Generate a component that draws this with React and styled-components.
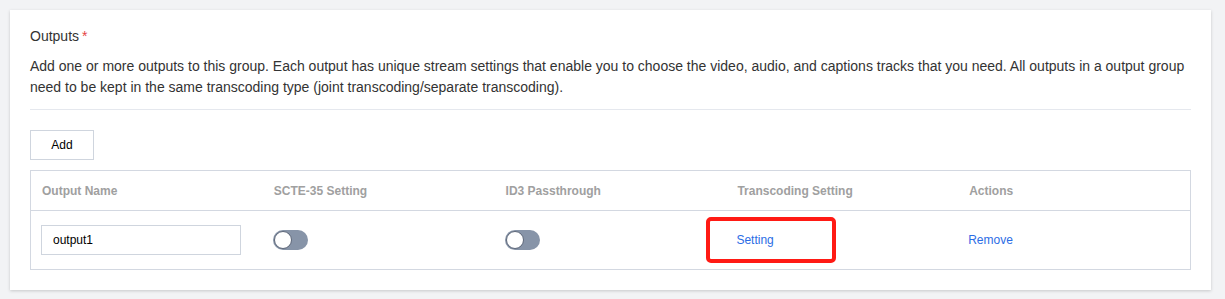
import React from 'react';
import styled, { createGlobalStyle } from 'styled-components';

const GlobalStyle = createGlobalStyle`
  html, body {
    margin: 0;
    padding: 0;
    background: #f2f3f5;
    font-family: "Liberation Sans", Arial, sans-serif;
  }
`;

const Page = styled.div`
  padding: 10px 14px 9px 10px;
`;

const Card = styled.div`
  background: #fff;
  box-shadow: 0 1px 3px rgba(0, 0, 0, 0.18);
  padding: 16px 20px 20px 20px;
`;

const Title = styled.div`
  font-size: 14px;
  color: #333;
  line-height: 20px;
  margin-bottom: 10px;
  span {
    color: #e54545;
    margin-left: 3px;
  }
`;

const Description = styled.p`
  margin: 0;
  font-size: 14px;
  line-height: 21px;
  color: #333;
  padding-bottom: 11px;
  border-bottom: 1px solid #e5e8ee;
`;

const Button = styled.button`
  display: block;
  margin-top: 20px;
  width: 64px;
  height: 30px;
  border: 1px solid #cfd5de;
  background: #fff;
  font-family: inherit;
  font-size: 12px;
  color: #000;
  padding: 0;
`;

const Table = styled.div`
  margin-top: 10px;
  border: 1px solid #d3d8e1;
`;

const Row = styled.div`
  display: grid;
  grid-template-columns: repeat(5, 1fr);
  height: ${p => p.h}px;
  align-items: center;
  & + & {
    border-top: 1px solid #d3d8e1;
  }
`;

const HeadCell = styled.div`
  padding-left: 11px;
  font-size: 12px;
  font-weight: bold;
  color: #a0a0a0;
`;

const Cell = styled.div`
  padding-left: 10px;
  font-size: 12px;
  color: #000;
`;

const Input = styled.input`
  box-sizing: border-box;
  width: 200px;
  height: 30px;
  border: 1px solid #cfd5de;
  padding: 0 11px;
  font-family: inherit;
  font-size: 12px;
  color: #000;
  outline: none;
`;

const Toggle = styled.div`
  position: relative;
  width: 35px;
  height: 20px;
  border-radius: 10px;
  background: #8794a8;
  &::after {
    content: '';
    position: absolute;
    left: 1px;
    top: 1px;
    width: 16px;
    height: 16px;
    border-radius: 50%;
    background: #fff;
    border: 1px solid #5c6678;
  }
`;

const Highlight = styled.div`
  box-sizing: border-box;
  width: 130px;
  height: 46px;
  margin-left: -30px;
  border: 4px solid #ff1a14;
  border-radius: 5px;
  display: flex;
  align-items: center;
  padding-left: 26px;
`;

const Link = styled.a`
  font-size: 12px;
  color: #2b6de5;
  cursor: pointer;
`;

const headers = ['Output Name', 'SCTE-35 Setting', 'ID3 Passthrough', 'Transcoding Setting', 'Actions'];

export default function App() {
  return (
    <Page>
      <GlobalStyle />
      <Card>
        <Title>
          Outputs<span>*</span>
        </Title>
        <Description>
          Add one or more outputs to this group. Each output has unique stream settings that enable you to choose the video, audio, and captions tracks that you need. All outputs in a output group need to be kept in the same transcoding type (joint transcoding/separate transcoding).
        </Description>
        <Button>Add</Button>
        <Table>
          <Row h={39}>
            {headers.map(h => (
              <HeadCell key={h}>{h}</HeadCell>
            ))}
          </Row>
          <Row h={58}>
            <Cell>
              <Input defaultValue="output1" />
            </Cell>
            <Cell>
              <Toggle />
            </Cell>
            <Cell>
              <Toggle />
            </Cell>
            <Cell>
              <Highlight>
                <Link>Setting</Link>
              </Highlight>
            </Cell>
            <Cell>
              <Link>Remove</Link>
            </Cell>
          </Row>
        </Table>
      </Card>
    </Page>
  );
}
